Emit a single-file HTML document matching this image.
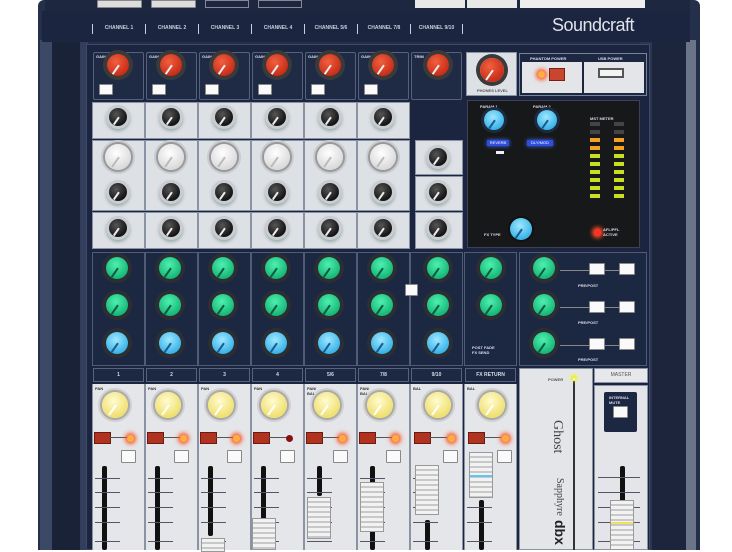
<!DOCTYPE html>
<html><head><meta charset="utf-8"><style>
*{margin:0;padding:0;box-sizing:border-box}
body{width:732px;height:550px;overflow:hidden;background:#fff;position:relative;font-family:"Liberation Sans",sans-serif}
div{position:absolute}
.col{top:0;width:53px;height:550px}
.gb{left:1px;top:52px;width:51px;height:48px;background:#1f2a45;border:1px solid #55627d;border-radius:2px}
.lb{left:0;width:53px;background:#dde0e5;border:1px solid #8a93a3}
.ab{left:0;top:252px;width:53px;height:114px;background:#1c2742;border:1px solid #4f5c78}
.nb{left:1px;top:368px;width:51px;height:14px;background:#1d2843;border:1px solid #56637e;color:#d8dce6;font-size:5px;font-weight:bold;text-align:center;line-height:12px}
.st{left:0;top:384px;width:53px;height:166px;background:#e4e6ea;border-left:1px solid #8a93a3;border-right:1px solid #8a93a3}
.k{border-radius:50%}
.k::after{content:"";position:absolute;left:50%;top:50%;width:1.5px;height:48%;background:#eee;transform-origin:top center;transform:rotate(35deg)}
.red{width:22px;height:22px;background:radial-gradient(circle at 40% 35%,#f0603e,#c92e1a 70%);box-shadow:0 0 0 4px #3a3a3a}
.blk{width:18px;height:18px;background:radial-gradient(circle at 40% 35%,#555,#141414 70%);box-shadow:0 0 0 3px #c9ccd0,0 2px 3px 3px #9aa}
.wht{width:26px;height:26px;background:radial-gradient(circle at 45% 35%,#fff,#d8d8d8 75%);box-shadow:0 0 0 2px #999,0 0 0 4px #c8cbcf}
.wht::after{background:#bbb}
.grn{width:22px;height:22px;background:radial-gradient(circle at 45% 35%,#4ef0b0,#18b878 70%);box-shadow:0 0 0 4px #2b2f33}
.grn::after{background:#0a5a40}
.blu{width:22px;height:22px;background:radial-gradient(circle at 45% 35%,#9ee8ff,#3cb4e8 70%);box-shadow:0 0 0 4px #2b2f33}
.blu::after{background:#1a5a90}
.yel{width:26px;height:26px;background:radial-gradient(circle at 45% 35%,#fffbd0,#f0e070 70%);box-shadow:0 0 0 2px #aaa,0 0 0 4px #d0d0d0}
.yel::after{background:#fff}
.btn{background:#fafafa;border:1px solid #888;border-radius:1px}
.mute{left:2px;top:432px;width:17px;height:12px;background:#b1321e;border:1px solid #6a1a10}
.led{left:35px;top:435px;width:7px;height:7px;border-radius:50%;background:#ffb040;box-shadow:0 0 4px 2px #ff5020}
.ln{left:17px;top:437px;width:20px;height:1px;background:#555}
.pfl{left:29px;top:450px;width:15px;height:13px}
.slot{left:10px;top:466px;width:5px;height:84px;background:#111;border-radius:2px}
.tk{left:3px;width:25px;height:1px;background:#556}
.cap{width:24px;background:repeating-linear-gradient(#f2f2f2 0 3px,#c8c8c8 3px 5px);border:1px solid #999}
.t{font-size:4px;color:#333;font-weight:bold}
.tw{font-size:4px;color:#dde;font-weight:bold}
</style></head><body>
<!-- chassis -->
<div style="left:38px;top:0;width:662px;height:550px;background:#243049;border-radius:6px 6px 0 0"></div>
<div style="left:40px;top:40px;width:12px;height:510px;background:#3b4866"></div>
<div style="left:52px;top:40px;width:28px;height:510px;background:#1a2238"></div>
<div style="left:80px;top:40px;width:8px;height:510px;background:#323e5c"></div>
<div style="left:650px;top:40px;width:38px;height:510px;background:#1c253b"></div>
<div style="left:640px;top:40px;width:12px;height:510px;background:#2b3752"></div>
<div style="left:686px;top:40px;width:10px;height:510px;background:#6b7488"></div>
<!-- top strip -->
<div style="left:45px;top:0;width:645px;height:11px;background:#1d2740"></div>
<div class="btn" style="left:97px;top:0;width:45px;height:8px;background:#ddd"></div>
<div class="btn" style="left:151px;top:0;width:45px;height:8px;background:#ddd"></div>
<div style="left:205px;top:0;width:44px;height:8px;border:1px solid #889"></div>
<div style="left:258px;top:0;width:44px;height:8px;border:1px solid #889"></div>
<div style="left:415px;top:0;width:50px;height:8px;background:#e8e8e8"></div>
<div style="left:467px;top:0;width:50px;height:8px;background:#e8e8e8"></div>
<div style="left:520px;top:0;width:125px;height:8px;background:#eee"></div>
<div style="left:42px;top:11px;width:648px;height:31px;background:#1b2540"></div>
<div style="left:92px;top:24px;width:380px;height:10px;color:#c9cfdc;font-size:5px;font-weight:bold;display:flex;line-height:8px">
<span style="width:53px;text-align:center;border-left:1px solid #ccd">CHANNEL 1</span><span style="width:53px;text-align:center;border-left:1px solid #ccd">CHANNEL 2</span><span style="width:53px;text-align:center;border-left:1px solid #ccd">CHANNEL 3</span><span style="width:53px;text-align:center;border-left:1px solid #ccd">CHANNEL 4</span><span style="width:53px;text-align:center;border-left:1px solid #ccd">CHANNEL 5/6</span><span style="width:53px;text-align:center;border-left:1px solid #ccd">CHANNEL 7/8</span><span style="width:53px;text-align:center;border-left:1px solid #ccd;border-right:1px solid #ccd">CHANNEL 9/10</span></div>
<div style="left:552px;top:15px;font-size:18px;color:#dfe3ea;letter-spacing:-0.5px">Soundcraft</div>
<!-- main panel -->
<div style="left:86px;top:44px;width:564px;height:506px;background:#1b2540;border:1px solid #3c4967"></div>

<div class="col" style="left:92px">
<div class="gb"><span class="tw" style="position:absolute;left:2px;top:1px">GAIN</span></div><div class="k red" style="left:15px;top:54px"></div><div class="btn" style="left:7px;top:84px;width:14px;height:11px"></div>
<div class="lb" style="top:102px;height:37px"></div><div class="k blk" style="left:17px;top:108px"></div>
<div class="lb" style="top:140px;height:71px"></div><div class="k wht" style="left:13px;top:144px"></div><div class="k blk" style="left:17px;top:183px"></div>
<div class="lb" style="top:212px;height:37px"></div><div class="k blk" style="left:17px;top:219px"></div>
<div class="ab"></div><div class="k grn" style="left:14px;top:257px"></div><div class="k grn" style="left:14px;top:294px"></div><div class="k blu" style="left:14px;top:332px"></div>
<div class="nb">1</div>
<div class="st"><span class="t" style="position:absolute;left:2px;top:2px">PAN</span></div><div class="k yel" style="left:10px;top:392px"></div>
<div class="mute"></div><div class="ln"></div><div class="led"></div><div class="btn pfl"></div><div class="slot"></div>
<div class="tk" style="top:478px"></div><div class="tk" style="top:492px"></div><div class="tk" style="top:507px"></div><div class="tk" style="top:522px"></div><div class="tk" style="top:541px"></div>
</div>
<div class="col" style="left:145px">
<div class="gb"><span class="tw" style="position:absolute;left:2px;top:1px">GAIN</span></div><div class="k red" style="left:15px;top:54px"></div><div class="btn" style="left:7px;top:84px;width:14px;height:11px"></div>
<div class="lb" style="top:102px;height:37px"></div><div class="k blk" style="left:17px;top:108px"></div>
<div class="lb" style="top:140px;height:71px"></div><div class="k wht" style="left:13px;top:144px"></div><div class="k blk" style="left:17px;top:183px"></div>
<div class="lb" style="top:212px;height:37px"></div><div class="k blk" style="left:17px;top:219px"></div>
<div class="ab"></div><div class="k grn" style="left:14px;top:257px"></div><div class="k grn" style="left:14px;top:294px"></div><div class="k blu" style="left:14px;top:332px"></div>
<div class="nb">2</div>
<div class="st"><span class="t" style="position:absolute;left:2px;top:2px">PAN</span></div><div class="k yel" style="left:10px;top:392px"></div>
<div class="mute"></div><div class="ln"></div><div class="led"></div><div class="btn pfl"></div><div class="slot"></div>
<div class="tk" style="top:478px"></div><div class="tk" style="top:492px"></div><div class="tk" style="top:507px"></div><div class="tk" style="top:522px"></div><div class="tk" style="top:541px"></div>
</div>
<div class="col" style="left:198px">
<div class="gb"><span class="tw" style="position:absolute;left:2px;top:1px">GAIN</span></div><div class="k red" style="left:15px;top:54px"></div><div class="btn" style="left:7px;top:84px;width:14px;height:11px"></div>
<div class="lb" style="top:102px;height:37px"></div><div class="k blk" style="left:17px;top:108px"></div>
<div class="lb" style="top:140px;height:71px"></div><div class="k wht" style="left:13px;top:144px"></div><div class="k blk" style="left:17px;top:183px"></div>
<div class="lb" style="top:212px;height:37px"></div><div class="k blk" style="left:17px;top:219px"></div>
<div class="ab"></div><div class="k grn" style="left:14px;top:257px"></div><div class="k grn" style="left:14px;top:294px"></div><div class="k blu" style="left:14px;top:332px"></div>
<div class="nb">3</div>
<div class="st"><span class="t" style="position:absolute;left:2px;top:2px">PAN</span></div><div class="k yel" style="left:10px;top:392px"></div>
<div class="mute"></div><div class="ln"></div><div class="led"></div><div class="btn pfl"></div><div class="slot" style="height:70px"></div>
<div class="tk" style="top:478px"></div><div class="tk" style="top:492px"></div><div class="tk" style="top:507px"></div><div class="tk" style="top:522px"></div><div class="tk" style="top:541px"></div>
<div class="cap" style="left:3px;top:538px;height:14px"></div>
</div>
<div class="col" style="left:251px">
<div class="gb"><span class="tw" style="position:absolute;left:2px;top:1px">GAIN</span></div><div class="k red" style="left:15px;top:54px"></div><div class="btn" style="left:7px;top:84px;width:14px;height:11px"></div>
<div class="lb" style="top:102px;height:37px"></div><div class="k blk" style="left:17px;top:108px"></div>
<div class="lb" style="top:140px;height:71px"></div><div class="k wht" style="left:13px;top:144px"></div><div class="k blk" style="left:17px;top:183px"></div>
<div class="lb" style="top:212px;height:37px"></div><div class="k blk" style="left:17px;top:219px"></div>
<div class="ab"></div><div class="k grn" style="left:14px;top:257px"></div><div class="k grn" style="left:14px;top:294px"></div><div class="k blu" style="left:14px;top:332px"></div>
<div class="nb">4</div>
<div class="st"><span class="t" style="position:absolute;left:2px;top:2px">PAN</span></div><div class="k yel" style="left:10px;top:392px"></div>
<div class="mute"></div><div class="ln"></div><div class="led" style="background:#8a1010;box-shadow:none"></div><div class="btn pfl"></div><div class="slot" style="height:60px"></div>
<div class="tk" style="top:478px"></div><div class="tk" style="top:492px"></div><div class="tk" style="top:507px"></div><div class="tk" style="top:522px"></div><div class="tk" style="top:541px"></div>
<div class="cap" style="left:1px;top:518px;height:32px"></div>
</div>
<div class="col" style="left:304px">
<div class="gb"><span class="tw" style="position:absolute;left:2px;top:1px">GAIN</span></div><div class="k red" style="left:15px;top:54px"></div><div class="btn" style="left:7px;top:84px;width:14px;height:11px"></div>
<div class="lb" style="top:102px;height:37px"></div><div class="k blk" style="left:17px;top:108px"></div>
<div class="lb" style="top:140px;height:71px"></div><div class="k wht" style="left:13px;top:144px"></div><div class="k blk" style="left:17px;top:183px"></div>
<div class="lb" style="top:212px;height:37px"></div><div class="k blk" style="left:17px;top:219px"></div>
<div class="ab"></div><div class="k grn" style="left:14px;top:257px"></div><div class="k grn" style="left:14px;top:294px"></div><div class="k blu" style="left:14px;top:332px"></div>
<div class="nb">5/6</div>
<div class="st"><span class="t" style="position:absolute;left:2px;top:2px">PAN/<br>BAL</span></div><div class="k yel" style="left:10px;top:392px"></div>
<div class="mute"></div><div class="ln"></div><div class="led"></div><div class="btn pfl"></div><div class="slot" style="left:13px;height:30px"></div>
<div class="tk" style="top:478px"></div><div class="tk" style="top:492px"></div><div class="tk" style="top:507px"></div><div class="tk" style="top:522px"></div><div class="tk" style="top:541px"></div>
<div class="cap" style="left:3px;top:497px;height:42px"></div>
</div>
<div class="col" style="left:357px">
<div class="gb"><span class="tw" style="position:absolute;left:2px;top:1px">GAIN</span></div><div class="k red" style="left:15px;top:54px"></div><div class="btn" style="left:7px;top:84px;width:14px;height:11px"></div>
<div class="lb" style="top:102px;height:37px"></div><div class="k blk" style="left:17px;top:108px"></div>
<div class="lb" style="top:140px;height:71px"></div><div class="k wht" style="left:13px;top:144px"></div><div class="k blk" style="left:17px;top:183px"></div>
<div class="lb" style="top:212px;height:37px"></div><div class="k blk" style="left:17px;top:219px"></div>
<div class="ab"></div><div class="k grn" style="left:14px;top:257px"></div><div class="k grn" style="left:14px;top:294px"></div><div class="k blu" style="left:14px;top:332px"></div>
<div class="nb">7/8</div>
<div class="st"><span class="t" style="position:absolute;left:2px;top:2px">PAN/<br>BAL</span></div><div class="k yel" style="left:10px;top:392px"></div>
<div class="mute"></div><div class="ln"></div><div class="led"></div><div class="btn pfl"></div><div class="slot" style="left:13px;height:84px"></div>
<div class="tk" style="top:478px"></div><div class="tk" style="top:492px"></div><div class="tk" style="top:507px"></div><div class="tk" style="top:522px"></div><div class="tk" style="top:541px"></div>
<div class="cap" style="left:3px;top:482px;height:50px"></div>
</div>
<div class="col" style="left:410px">
<div class="gb"><span class="tw" style="position:absolute;left:2px;top:1px">TRIM</span></div><div class="k red" style="left:17px;top:54px"></div>
<div class="lb" style="top:140px;height:35px;left:5px;width:48px"></div><div class="k blk" style="left:19px;top:148px"></div>
<div class="lb" style="top:176px;height:35px;left:5px;width:48px"></div><div class="k blk" style="left:19px;top:183px"></div>
<div class="lb" style="top:212px;height:37px;left:5px;width:48px"></div><div class="k blk" style="left:19px;top:219px"></div>
<div class="ab"></div><div class="k grn" style="left:17px;top:257px"></div><div class="k grn" style="left:17px;top:294px"></div><div class="k blu" style="left:17px;top:332px"></div>
<div class="btn" style="left:-5px;top:284px;width:13px;height:12px"></div>
<div class="nb">9/10</div>
<div class="st"><span class="t" style="position:absolute;left:2px;top:2px">BAL</span></div><div class="k yel" style="left:15px;top:392px"></div>
<div class="mute" style="left:4px"></div><div class="ln"></div><div class="led" style="left:38px"></div><div class="btn pfl" style="left:33px"></div><div class="slot" style="left:15px;top:520px;height:30px"></div>
<div class="tk" style="top:478px"></div><div class="tk" style="top:492px"></div><div class="tk" style="top:507px"></div><div class="tk" style="top:522px"></div><div class="tk" style="top:541px"></div>
<div class="cap" style="left:5px;top:465px;height:50px"></div>
</div>
<div class="col" style="left:464px">
<div class="ab" style="height:114px"></div><div class="k grn" style="left:16px;top:257px"></div><div class="k grn" style="left:16px;top:294px"></div>
<div class="tw" style="left:8px;top:345px;font-size:4px">POST FADE<br>FX SEND</div>
<div class="nb">FX RETURN</div>
<div class="st"><span class="t" style="position:absolute;left:2px;top:2px">BAL</span></div><div class="k yel" style="left:15px;top:392px"></div>
<div class="mute" style="left:4px"></div><div class="ln"></div><div class="led" style="left:38px"></div><div class="btn pfl" style="left:33px"></div><div class="slot" style="left:15px;top:500px;height:50px"></div>
<div class="tk" style="top:507px"></div><div class="tk" style="top:522px"></div><div class="tk" style="top:541px"></div>
<div class="cap" style="left:5px;top:452px;height:46px"></div><div style="left:6px;top:475px;width:22px;height:2px;background:#5cc8f0"></div>
</div>
<!-- phones / phantom / usb -->
<div style="left:466px;top:52px;width:51px;height:44px;background:#dde0e5;border:1px solid #8a93a3"></div>
<div class="k red" style="left:480px;top:58px;width:24px;height:24px"></div>
<div class="t" style="left:477px;top:88px;color:#555">PHONES LEVEL</div>
<div style="left:519px;top:53px;width:128px;height:43px;background:#1c2742;border:1px solid #7a8499"></div>
<div style="left:522px;top:62px;width:60px;height:31px;background:#e3e5e9"></div>
<div style="left:584px;top:62px;width:60px;height:31px;background:#e3e5e9"></div>
<div class="tw" style="left:530px;top:56px">PHANTOM POWER</div><div class="tw" style="left:598px;top:56px">USB POWER</div>
<div class="led" style="left:538px;top:71px"></div>
<div style="left:549px;top:68px;width:16px;height:13px;background:#c9452e;border:1px solid #7a2010"></div>
<div style="left:598px;top:68px;width:26px;height:10px;background:#f3f3f3;border:2px solid #555"></div>
<!-- FX panel -->
<div style="left:467px;top:100px;width:173px;height:148px;background:#161819;border:1px solid #3b4257"></div>
<div class="tw" style="left:480px;top:104px">PARAM 1</div><div class="tw" style="left:533px;top:104px">PARAM 2</div>
<div class="k blu" style="left:484px;top:110px;width:20px;height:20px;box-shadow:0 0 0 3px #1e2a40"></div>
<div class="k blu" style="left:537px;top:110px;width:20px;height:20px;box-shadow:0 0 0 3px #1e2a40"></div>
<div style="left:487px;top:140px;width:22px;height:6px;background:#2d4fe0;box-shadow:0 0 4px #4a6aff;font-size:4px;color:#fff;text-align:center">REVERB</div>
<div style="left:527px;top:140px;width:26px;height:6px;background:#2d4fe0;box-shadow:0 0 4px #4a6aff;font-size:4px;color:#fff;text-align:center">DLY/MOD</div>
<div style="left:496px;top:151px;width:8px;height:3px;background:#eef"></div>
<div class="k blu" style="left:510px;top:218px;width:22px;height:22px;box-shadow:0 0 0 2px #111"></div>
<div class="tw" style="left:484px;top:232px">FX TYPE</div>
<div class="tw" style="left:590px;top:116px">MST METER</div>
<div style="left:590px;top:122px;width:10px;height:73px;background:repeating-linear-gradient(#444 0 4px,transparent 4px 8px)"></div>
<div style="left:614px;top:122px;width:10px;height:73px;background:repeating-linear-gradient(#444 0 4px,transparent 4px 8px)"></div>
<div style="left:590px;top:138px;width:10px;height:12px;background:repeating-linear-gradient(#f4a020 0 4px,transparent 4px 8px)"></div>
<div style="left:614px;top:138px;width:10px;height:12px;background:repeating-linear-gradient(#f4a020 0 4px,transparent 4px 8px)"></div>
<div style="left:590px;top:154px;width:10px;height:44px;background:repeating-linear-gradient(#c8e020 0 4px,transparent 4px 8px)"></div>
<div style="left:614px;top:154px;width:10px;height:44px;background:repeating-linear-gradient(#c8e020 0 4px,transparent 4px 8px)"></div>
<div class="led" style="left:594px;top:229px;background:#ff3030"></div>
<div class="tw" style="left:603px;top:227px">AFL/PFL<br>ACTIVE</div>
<!-- right aux masters -->
<div style="left:519px;top:252px;width:128px;height:114px;background:#1c2742;border:1px solid #4f5c78"></div>
<div class="k grn" style="left:533px;top:257px"></div><div class="k grn" style="left:533px;top:294px"></div><div class="k grn" style="left:533px;top:332px"></div>
<div style="left:560px;top:270px;width:70px;height:1px;background:#888"></div>
<div style="left:560px;top:307px;width:70px;height:1px;background:#888"></div>
<div style="left:560px;top:345px;width:70px;height:1px;background:#888"></div>
<div class="btn" style="left:589px;top:263px;width:16px;height:12px"></div><div class="btn" style="left:619px;top:263px;width:16px;height:12px"></div>
<div class="btn" style="left:589px;top:301px;width:16px;height:12px"></div><div class="btn" style="left:619px;top:301px;width:16px;height:12px"></div>
<div class="btn" style="left:589px;top:338px;width:16px;height:12px"></div><div class="btn" style="left:619px;top:338px;width:16px;height:12px"></div>
<div class="tw" style="left:578px;top:283px">PRE/POST</div><div class="tw" style="left:578px;top:320px">PRE/POST</div><div class="tw" style="left:578px;top:357px">PRE/POST</div>
<!-- power / master -->
<div style="left:519px;top:368px;width:74px;height:182px;background:#e3e5e9;border:1px solid #8a93a3"></div>
<div style="left:573px;top:376px;width:2px;height:174px;background:#333"></div>
<div class="t" style="left:548px;top:377px;color:#555">POWER</div>
<div class="k" style="left:571px;top:375px;width:6px;height:6px;background:#eef030;box-shadow:0 0 3px #ff0"></div>
<div style="left:565px;top:420px;font-family:'Liberation Serif',serif;font-size:14px;color:#444;transform:rotate(90deg);transform-origin:0 0">Ghost</div>
<div style="left:565px;top:478px;font-family:'Liberation Serif',serif;font-size:10px;color:#444;transform:rotate(90deg);transform-origin:0 0">Sapphyre</div>
<div style="left:568px;top:520px;font-size:14px;font-weight:bold;color:#222;transform:rotate(90deg);transform-origin:0 0">dbx</div>
<div style="left:594px;top:368px;width:54px;height:15px;background:#e6e8ec;border:1px solid #8a93a3;font-size:5px;color:#555;text-align:center;line-height:13px">MASTER</div>
<div style="left:594px;top:385px;width:54px;height:165px;background:#e3e5e9;border:1px solid #8a93a3"></div>
<div style="left:604px;top:392px;width:33px;height:40px;background:#1c2742;border-radius:2px"></div>
<div class="tw" style="left:609px;top:395px">INTERNAL<br>MUTE</div>
<div class="btn" style="left:613px;top:406px;width:15px;height:12px"></div>
<div style="left:620px;top:466px;width:5px;height:36px;background:#111;border-radius:2px"></div>
<div style="left:598px;top:477px;width:42px;height:1px;background:#556"></div>
<div style="left:598px;top:492px;width:42px;height:1px;background:#556"></div>
<div style="left:598px;top:507px;width:42px;height:1px;background:#556"></div>
<div style="left:598px;top:522px;width:42px;height:1px;background:#556"></div>
<div style="left:598px;top:541px;width:42px;height:1px;background:#556"></div>
<div class="cap" style="left:610px;top:500px;height:50px"></div><div style="left:611px;top:522px;width:22px;height:2px;background:#f0e060"></div>
</body></html>
